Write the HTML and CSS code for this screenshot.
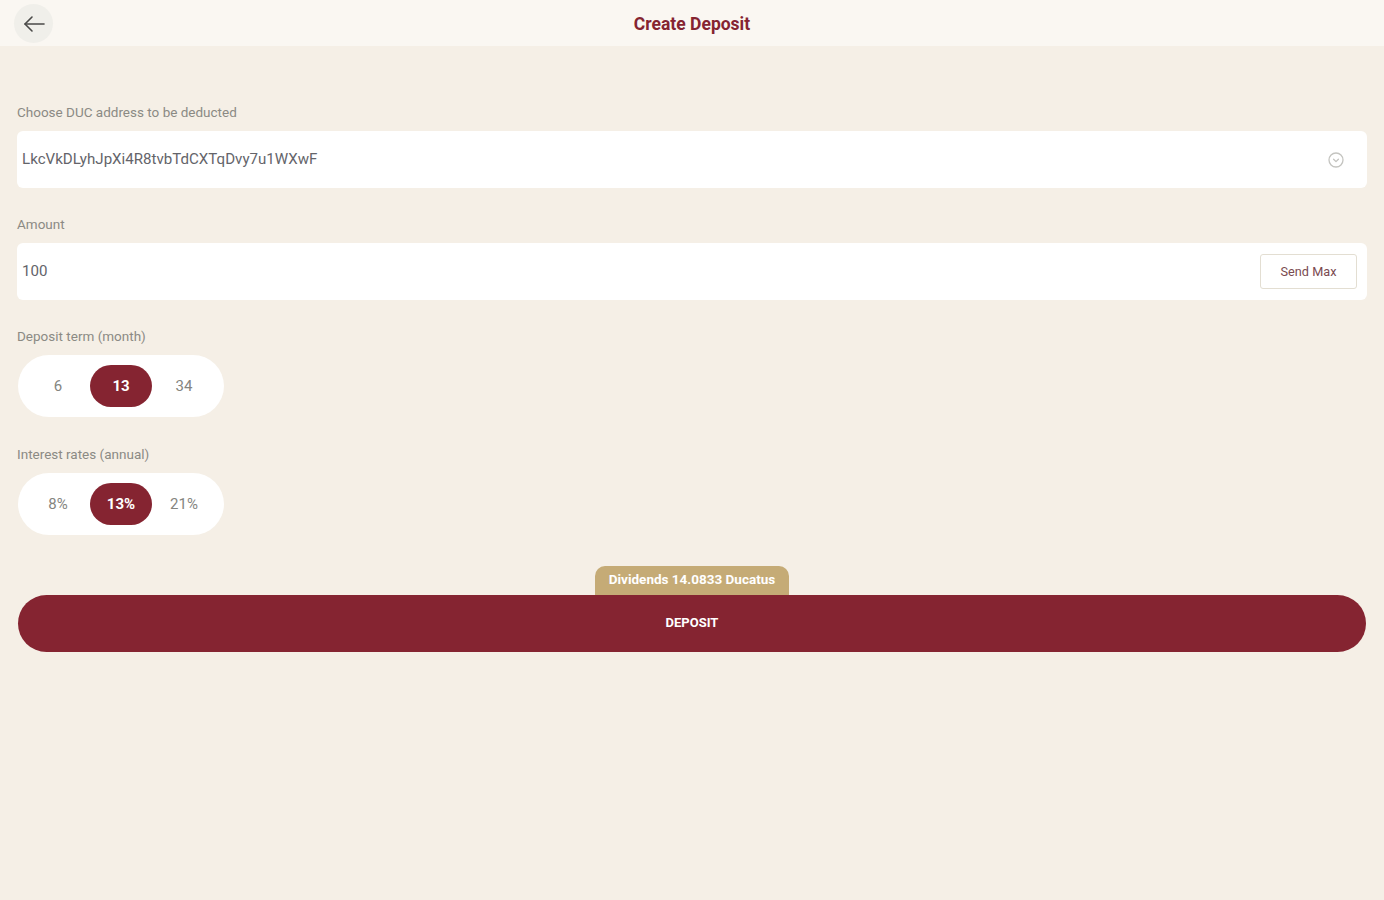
FILE: index.html
```html
<!DOCTYPE html>
<html lang="en">
<head>
    <meta charset="UTF-8">
    <meta name="viewport" content="width=device-width, initial-scale=1.0">
    <title>Create Deposit</title>
    <link rel="stylesheet" href="styles.css">
</head>
<body>
    <header class="topbar">
        <button class="back-btn" type="button" aria-label="Back">
            <svg width="24" height="24" viewBox="0 0 24 24" fill="none" stroke="#4a4a48" stroke-width="1.6" stroke-linecap="round" stroke-linejoin="round">
                <path d="M22 12H3"/>
                <path d="M10 5l-7 7 7 7"/>
            </svg>
        </button>
        <h1 class="topbar-title">Create Deposit</h1>
    </header>

    <main class="content">
        <div class="group">
            <label class="group-label">Choose DUC address to be deducted</label>
            <div class="field">
                <span class="field-value">LkcVkDLyhJpXi4R8tvbTdCXTqDvy7u1WXwF</span>
                <svg class="field-icon" width="18" height="18" viewBox="0 0 18 18" fill="none" stroke="#c4c4c0" stroke-width="1.3" stroke-linecap="round" stroke-linejoin="round">
                    <circle cx="9" cy="9" r="7"/>
                    <path d="M6.6 8.2L9 10.6l2.4-2.4"/>
                </svg>
            </div>
        </div>

        <div class="group">
            <label class="group-label">Amount</label>
            <div class="field">
                <span class="field-value">100</span>
                <button class="send-max" type="button">Send Max</button>
            </div>
        </div>

        <div class="group group-choice">
            <label class="group-label">Deposit term (month)</label>
            <div class="choice">
                <span class="choice-item">6</span>
                <span class="choice-item active">13</span>
                <span class="choice-item">34</span>
            </div>
        </div>

        <div class="group group-choice">
            <label class="group-label">Interest rates (annual)</label>
            <div class="choice">
                <span class="choice-item">8%</span>
                <span class="choice-item active">13%</span>
                <span class="choice-item">21%</span>
            </div>
        </div>

        <div class="submit-wrap">
            <div class="dividends">Dividends 14.0833 Ducatus</div>
            <button class="deposit-btn" type="button">DEPOSIT</button>
        </div>
    </main>
</body>
</html>
```

FILE: styles.css
```css
/* Base styles */
body {
    margin: 0;
    min-height: 900px;
    background: #f5efe6;
    font-family: 'Roboto', 'Liberation Sans', sans-serif;
    color: #55554f;
}

button {
    font-family: inherit;
    cursor: pointer;
}

/* Top bar */
.topbar {
    height: 46px;
    padding-top: 2px;
    box-sizing: border-box;
    display: flex;
    align-items: center;
    justify-content: center;
    position: relative;
    background: #faf7f2;
}

.topbar-title {
    margin: 0;
    font-size: 17.5px;
    font-weight: 700;
    color: #852431;
}

.back-btn {
    position: absolute;
    left: 14px;
    top: 4px;
    width: 39px;
    height: 39px;
    padding: 0;
    display: flex;
    align-items: center;
    justify-content: center;
    border: none;
    border-radius: 50%;
    background: #f0efea;
}

/* Form */
.content {
    padding: 60px 17px 0;
}

.group {
    margin-bottom: 30px;
}

.group-choice {
    margin-bottom: 31px;
}

.group-label {
    display: block;
    height: 14px;
    margin-bottom: 11px;
    font-size: 13.5px;
    line-height: 12px;
    color: #8b8a84;
}

.field {
    height: 57px;
    padding: 0 10px 0 5px;
    display: flex;
    align-items: center;
    justify-content: space-between;
    background: #fff;
    border-radius: 6px;
}

.field-value {
    padding-bottom: 2px;
    font-size: 15.1px;
    line-height: 16px;
    color: #64646a;
}

.field-icon {
    margin-right: 12px;
}

.send-max {
    width: 97px;
    height: 35px;
    padding: 0;
    background: #fff;
    border: 1px solid #e3ded2;
    border-radius: 3px;
    font-size: 12.7px;
    color: #7a4a50;
}

/* Pill selectors */
.choice {
    width: 187px;
    height: 62px;
    margin-left: 1px;
    padding: 0 10px 0 9px;
    display: flex;
    align-items: center;
    background: #fff;
    border-radius: 31px;
}

.choice-item {
    flex: none;
    width: 62px;
    height: 42px;
    margin-right: 1px;
    display: flex;
    align-items: center;
    justify-content: center;
    border-radius: 21px;
    font-size: 15px;
    color: #85857f;
}

.choice-item.active {
    background: #852431;
    font-weight: 700;
    color: #fff;
}

/* Deposit button */
.submit-wrap {
    display: flex;
    flex-direction: column;
    align-items: center;
}

.dividends {
    width: 194px;
    height: 29px;
    padding-bottom: 4px;
    box-sizing: border-box;
    display: flex;
    align-items: center;
    justify-content: center;
    background: #c5ab76;
    border-radius: 10px 10px 0 0;
    font-size: 13.5px;
    font-weight: 700;
    color: #fff;
}

.deposit-btn {
    width: 1348px;
    height: 57px;
    padding: 0 0 2px;
    border: none;
    border-radius: 29px;
    background: #852431;
    font-size: 13px;
    font-weight: 700;
    color: #fff;
}
```
